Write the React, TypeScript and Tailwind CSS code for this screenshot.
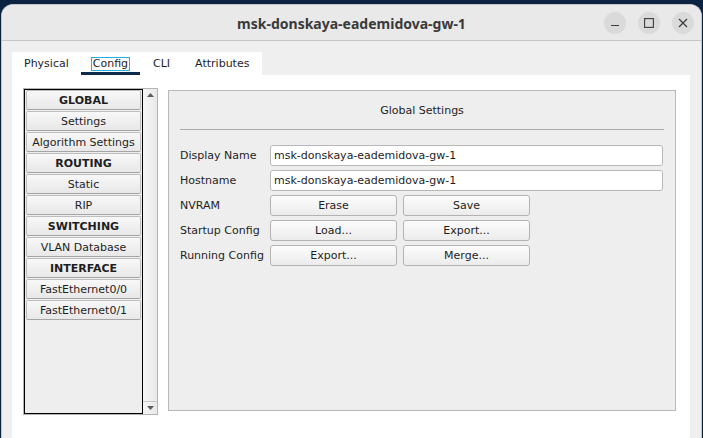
export default function App() {
  const items: { t: string; b?: boolean }[] = [
    { t: "GLOBAL", b: true },
    { t: "Settings" },
    { t: "Algorithm Settings" },
    { t: "ROUTING", b: true },
    { t: "Static" },
    { t: "RIP" },
    { t: "SWITCHING", b: true },
    { t: "VLAN Database" },
    { t: "INTERFACE", b: true },
    { t: "FastEthernet0/0" },
    { t: "FastEthernet0/1" },
  ];
  const btn =
    "w-[127px] h-[21px] flex items-center justify-center pt-[1px] rounded-[3px] border border-[#b3b3b3] bg-gradient-to-b from-[#fcfcfc] to-[#ececec] text-[11px] text-[#1e1e1e]";
  const label = "w-[90px] text-[11px] text-[#1e1e1e] pt-[1px]";
  const input =
    "w-[393px] h-[21px] bg-white border border-[#b8b8b8] rounded-[3px] flex items-center pt-[1px] px-[3px] text-[11px] text-[#1e1e1e]";
  return (
    <div className="w-[703px] h-[438px] bg-[#0b2240] overflow-hidden pt-[4px] pl-[1px] pr-[1px] flex" style={{ fontFamily: '"DejaVu Sans", sans-serif' }}>
      <div className="flex-1 flex flex-col rounded-t-[12px] bg-[#efefef] border-l border-r border-t border-[#c6c6c6] overflow-hidden">
        {/* Title bar */}
        <div className="h-[36px] shrink-0 bg-[#e9e9e9] border-b border-[#c4c4c4] grid grid-cols-[1fr_auto_1fr] items-center">
          <div />
          <div className="text-[14px] font-bold text-[#3a3a3a] pt-[1px]" style={{ fontFamily: '"Noto Sans", sans-serif' }}>
            msk-donskaya-eademidova-gw-1
          </div>
          <div className="flex justify-end items-center gap-[12px] pr-[7px]">
            <div className="w-[22px] h-[22px] rounded-full bg-[#dadada] flex items-center justify-center">
              <svg width="10" height="10" viewBox="0 0 10 10"><path d="M1 7.5h8" stroke="#3c3c3c" strokeWidth="1.2" /></svg>
            </div>
            <div className="w-[22px] h-[22px] rounded-full bg-[#dadada] flex items-center justify-center">
              <svg width="10" height="10" viewBox="0 0 10 10"><rect x="0.6" y="0.6" width="8.8" height="8.8" fill="none" stroke="#3c3c3c" strokeWidth="1.1" /></svg>
            </div>
            <div className="w-[22px] h-[22px] rounded-full bg-[#dadada] flex items-center justify-center">
              <svg width="10" height="10" viewBox="0 0 10 10"><path d="M1 1L9 9M9 1L1 9" stroke="#3c3c3c" strokeWidth="1.2" /></svg>
            </div>
          </div>
        </div>
        {/* Body */}
        <div className="flex-1 flex flex-col pt-[11px] pl-[10px] pr-[11px]">
          <div className="w-[250px] h-[23px] bg-white flex pl-[1px] text-[11px] text-[#1e1e1e]">
            <div className="px-[11px] flex items-center pt-[2px]">Physical</div>
            <div className="ml-[1px] px-[10px] flex flex-col">
              <div className="flex-1 flex items-center justify-center pt-[4px]">
                <span className="border border-[#1fb2e3] px-[1px] leading-[12px]">Config</span>
              </div>
              <div className="h-[3px] bg-[#0e2a4d] -mx-[10px]" />
            </div>
            <div className="pl-[13px] pr-[12px] flex items-center pt-[2px]">CLI</div>
            <div className="pl-[13px] flex items-center pt-[2px]">Attributes</div>
          </div>
          <div className="flex-1 bg-white flex items-start pt-[13px] pl-[11px]">
            {/* List */}
            <div className="w-[135px] h-[327px] border border-[#b4b4b4] flex">
              <div className="w-[119px] h-full border border-black bg-[#eeeeee] flex flex-col px-[1px]">
                {items.map((it) => (
                  <div
                    key={it.t}
                    className={`h-[20px] mb-[1px] shrink-0 pt-[2px] rounded-[2px] border border-[#bdbdbd] border-b-[#a5a5a5] bg-gradient-to-b from-[#f8f8f8] to-[#e8e8e8] flex items-center justify-center text-[11px] text-[#1e1e1e] ${it.b ? "font-bold" : ""}`}
                  >
                    {it.t}
                  </div>
                ))}
              </div>
              <div className="w-[14px] h-full bg-gradient-to-r from-[#f6f6f6] to-[#e9e9e9] flex flex-col justify-between">
                <div className="h-[12px] flex items-center justify-center">
                  <svg width="7" height="4" viewBox="0 0 7 4"><path d="M0 4L3.5 0L7 4Z" fill="#5c5c5c" /></svg>
                </div>
                <div className="h-[13px] border-t border-[#c8c8c8] flex items-center justify-center">
                  <svg width="7" height="4" viewBox="0 0 7 4"><path d="M0 0L3.5 4L7 0Z" fill="#5c5c5c" /></svg>
                </div>
              </div>
            </div>
            {/* Panel */}
            <div className="ml-[10px] mt-[2px] w-[508px] h-[321px] border border-[#b8b8b8] bg-[#eeeeee] pt-[13px] pl-[11px] pr-[11px] flex flex-col">
              <div className="text-center text-[11px] leading-[14px] text-[#1e1e1e]">Global Settings</div>
              <div className="mt-[11px] h-px bg-[#acacac]" />
              <div className="mt-[15px] flex flex-col gap-[4px]">
                <div className="flex items-center h-[21px]">
                  <div className={label}>Display Name</div>
                  <div className={input}>msk-donskaya-eademidova-gw-1</div>
                </div>
                <div className="flex items-center h-[21px]">
                  <div className={label}>Hostname</div>
                  <div className={input}>msk-donskaya-eademidova-gw-1</div>
                </div>
                <div className="flex items-center h-[21px]">
                  <div className={label}>NVRAM</div>
                  <div className="flex gap-[6px]">
                    <div className={btn}>Erase</div>
                    <div className={btn}>Save</div>
                  </div>
                </div>
                <div className="flex items-center h-[21px]">
                  <div className={label}>Startup Config</div>
                  <div className="flex gap-[6px]">
                    <div className={btn}>Load...</div>
                    <div className={btn}>Export...</div>
                  </div>
                </div>
                <div className="flex items-center h-[21px]">
                  <div className={label}>Running Config</div>
                  <div className="flex gap-[6px]">
                    <div className={btn}>Export...</div>
                    <div className={btn}>Merge...</div>
                  </div>
                </div>
              </div>
            </div>
          </div>
        </div>
      </div>
    </div>
  );
}
